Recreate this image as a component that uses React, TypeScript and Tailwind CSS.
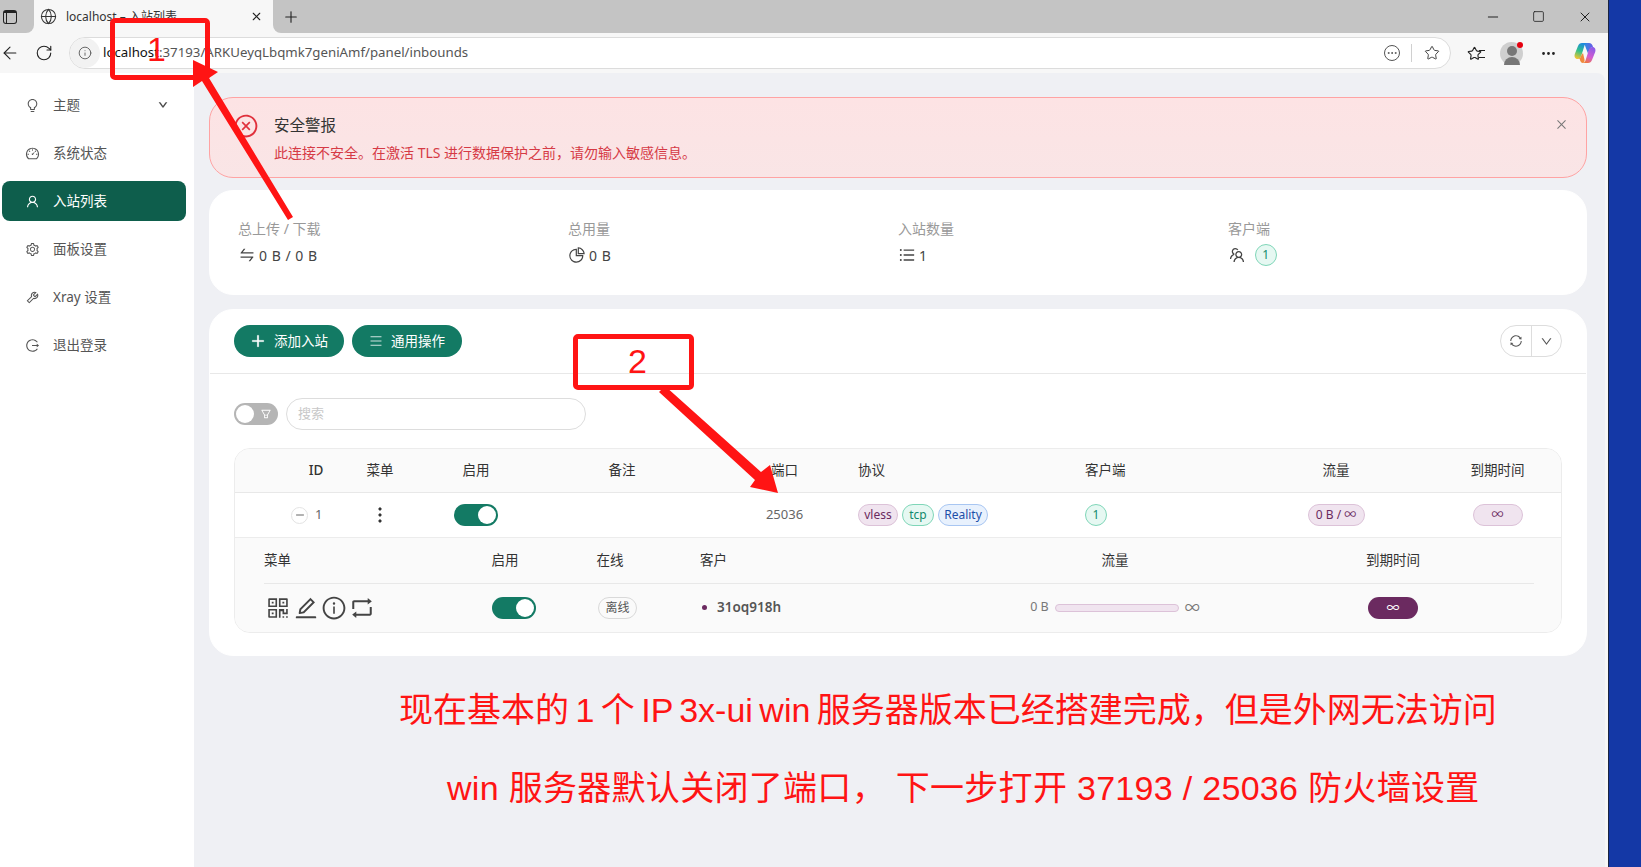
import { Globe, Minus, Plus, RotateCw, Square, Star, X, ArrowLeft, Info, Ellipsis } from "lucide-react";
import {
  AiOutlineBars,
  AiOutlineBulb,
  AiOutlineClose,
  AiOutlineCloseCircle,
  AiOutlineDashboard,
  AiOutlineDown,
  AiOutlineEdit,
  AiOutlineFilter,
  AiOutlineInfoCircle,
  AiOutlineLogout,
  AiOutlineMenu,
  AiOutlineMore,
  AiOutlinePieChart,
  AiOutlinePlus,
  AiOutlineQrcode,
  AiOutlineRetweet,
  AiOutlineSetting,
  AiOutlineSwap,
  AiOutlineSync,
  AiOutlineTeam,
  AiOutlineTool,
  AiOutlineUser,
} from "react-icons/ai";
import type { ReactNode } from "react";

const pillTones = {
  purple: "bg-[#f0e4ef] border-[#dcc2d8] text-[#6b2a60]",
  green: "bg-[#e6f8f2] border-[#7fd6b8] text-[#128a6c]",
  blue: "bg-[#e8f1fd] border-[#a8c6f2] text-[#1d4fa8]",
};

function Pill({ tone, className = "", children }: { tone: keyof typeof pillTones; className?: string; children: ReactNode }) {
  return (
    <span className={`flex h-[22px] items-center justify-center rounded-full border text-[12px] ${pillTones[tone]} ${className}`}>
      {children}
    </span>
  );
}

function Toggle() {
  return (
    <span className="flex h-[22px] w-[44px] items-center justify-end rounded-full bg-[#137a64] pr-[2px]">
      <span className="size-[18px] rounded-full bg-white" />
    </span>
  );
}

function NavItem({ icon, label, active, chevron }: { icon: ReactNode; label: string; active?: boolean; chevron?: boolean }) {
  return (
    <li
      className={`ml-[2px] mr-2 flex h-10 items-center gap-[13px] rounded-lg pl-[22px] text-[13.5px] ${
        active ? "bg-[#0e5e4c] text-white" : "text-[#555]"
      }`}
    >
      <span className="flex w-4 justify-center text-[15px]">{icon}</span>
      {label}
      {chevron && <AiOutlineDown className="ml-[65px] text-[10px] text-[#333] [stroke-width:60]" />}
    </li>
  );
}

function Stat({ label, icon, children }: { label: string; icon: ReactNode; children: ReactNode }) {
  return (
    <div className="w-[330px]">
      <div className="text-[14px] leading-5 text-[#999]">{label}</div>
      <div className="mt-[6px] flex h-5 items-center gap-[3px] text-[14px] tracking-[0.5px] text-[#444]">
        <span className="text-[18px]">{icon}</span>
        {children}
      </div>
    </div>
  );
}

function GreenButton({ icon, label }: { icon: ReactNode; label: string }) {
  return (
    <button className="flex h-8 w-[110px] items-center justify-center gap-[8px] rounded-full bg-[#137a64] text-[13.5px] text-white">
      {icon}
      {label}
    </button>
  );
}

function CopilotIcon() {
  return (
    <svg viewBox="0 0 24 24" className="size-[24px]">
      <defs>
        <linearGradient id="cpA" x1="0.6" y1="0" x2="0.3" y2="1">
          <stop offset="0" stopColor="#1e88e0" />
          <stop offset="0.5" stopColor="#2fc08a" />
          <stop offset="1" stopColor="#f2c531" />
        </linearGradient>
        <linearGradient id="cpB" x1="0.7" y1="0" x2="0.3" y2="1">
          <stop offset="0" stopColor="#8a5ce8" />
          <stop offset="0.6" stopColor="#d35bd0" />
          <stop offset="1" stopColor="#f0783c" />
        </linearGradient>
        <linearGradient id="cpC" x1="0" y1="0" x2="1" y2="0">
          <stop offset="0" stopColor="#1e9ae0" />
          <stop offset="1" stopColor="#6a5be6" />
        </linearGradient>
      </defs>
      <path d="M9 2h7c2 0 3.500 1.500 4 4-2 0-3.200 1.500-4 4l-1 2.500L12.500 6C12 4 11 2 9 2z" fill="url(#cpC)" />
      <path d="M9 2h5c-1 0-2 1-2.500 2.500L8.500 14c-.8 2.500-2 4-4 4C2 18 1 15.500 1.800 13L5 5C5.800 3 7 2 9 2z" fill="url(#cpA)" />
      <path d="M15 22h-5c1 0 2-1 2.500-2.500l3-9.500c.8-2.500 2-4 4-4 2.500 0 3.500 2.500 2.700 5L19 19c-.8 2-2 3-4 3z" fill="url(#cpB)" />
      <path d="M4.500 18c2 0 3.200-1.300 4-4l1.500-2 1.500 6.500c.4 1.800-.5 3.500-1.500 3.500-2 0-2.800-2-3.300-4z" fill="#f08a3c" />
    </svg>
  );
}

function BrowserChrome() {
  return (
    <>
      <div className="flex h-[33px] items-stretch bg-[#f7f7f7]">
        <div className="flex w-[34px] items-center rounded-br-lg bg-[#c4c4c4] pl-[3px]">
          <span className="h-[14px] w-[14px] rounded-[3px] border-[1.5px] border-t-[3px] border-[#222]">
            <span className="block h-full w-[3px] border-r-[1.5px] border-[#222]" />
          </span>
        </div>
        <div className="flex w-[239px] items-center rounded-t-lg pl-[5px] pr-[10px] text-[12px] text-[#333]">
          <Globe className="ml-[1px] size-[17px] text-[#333]" strokeWidth={1.5} />
          <span className="ml-[9px] flex-1">localhost – 入站列表</span>
          <X className="size-[13px] text-[#222]" />
        </div>
        <div className="flex flex-1 items-center rounded-bl-lg bg-[#c4c4c4] pl-[9px]">
          <Plus className="size-[18px] text-[#222]" strokeWidth={1.5} />
          <div className="ml-auto flex items-center gap-[30px] pr-[15px] text-[#222]">
            <Minus className="size-4" strokeWidth={1.5} />
            <Square className="mx-[1px] size-[13px]" strokeWidth={1.5} />
            <X className="ml-[1px] size-4" strokeWidth={1.5} />
          </div>
        </div>
      </div>
      <div className="flex h-10 items-center bg-[#f7f7f7] text-[#222]">
        <ArrowLeft className="size-[20px]" strokeWidth={1.3} />
        <RotateCw className="ml-[15px] size-[18px]" strokeWidth={1.5} />
        <div className="ml-[16px] flex h-8 w-[1382px] items-center rounded-full border border-[#dcdcdc] bg-white pr-[10px]">
          <span className="flex h-[30px] w-[30px] items-center justify-center rounded-full bg-[#f2f2f2]">
            <Info className="size-[14px] text-[#555]" strokeWidth={1.5} />
          </span>
          <span className="ml-[3px] text-[13.25px] text-[#555]">
            <span className="text-[#111]">localhost</span>:37193/ARKUeyqLbqmk7geniAmf/panel/inbounds
          </span>
          <span className="ml-auto flex size-4 items-center justify-center rounded-full border border-[#555]">
            <Ellipsis className="size-3 text-[#555]" />
          </span>
          <span className="ml-[11px] h-[18px] w-px bg-[#d0d0d0]" />
          <Star className="ml-[12px] size-[16px] text-[#444]" strokeWidth={1.5} />
        </div>
        <span className="relative ml-[16px] flex">
          <Star className="size-[15px]" strokeWidth={1.8} />
          <span className="absolute left-[12px] top-[4px] h-[8px] w-[6px] border-y-[1.5px] border-[#222]" />
        </span>
        <span className="relative ml-[18px] flex size-[23px] items-end justify-center overflow-visible rounded-full bg-[#cfcfcf]">
          <span className="absolute top-[4px] size-[10px] rounded-full bg-[#777]" />
          <span className="h-[8px] w-[16px] rounded-t-full bg-[#777]" />
          <span className="absolute right-0 top-0 size-[6px] rounded-full bg-[#e5000f]" />
        </span>
        <Ellipsis className="ml-[17px] size-[17px]" />
        <span className="ml-[16px] flex">
          <CopilotIcon />
        </span>
      </div>
    </>
  );
}

function Annotations() {
  return (
    <>
      <div className="absolute left-[110px] top-[18px] h-[62px] w-[100px] rounded-[5px] border-[5px] border-[#ff1414]" />
      <span className="absolute left-[147px] top-[29px] text-[34px] leading-10 text-[#ff1414] [font-family:'Liberation_Sans',sans-serif]">1</span>
      <div className="absolute left-[573px] top-[334px] h-[56px] w-[121px] rounded-[5px] border-[5px] border-[#ff1414]" />
      <span className="absolute left-[628px] top-[341px] text-[34px] leading-10 text-[#ff1414] [font-family:'Liberation_Sans',sans-serif]">2</span>
      <svg className="pointer-events-none absolute left-0 top-0 size-full" viewBox="0 0 1641 867">
        <polygon points="193,60 218,72 209,78 293,217 288,220 202,81 193,87" fill="#ff1414" />
        <polygon points="778,493 770,465 761,472 665,386 659,392 755,480 750,487" fill="#ff1414" />
      </svg>
      <p className="absolute left-[399px] top-[688px] whitespace-nowrap text-[34px] leading-[44px] text-[#ff1414] [word-spacing:-3px] [font-family:'Liberation_Sans','Noto_Sans_CJK_SC',sans-serif]">
        现在基本的 1 个 IP 3x-ui win 服务器版本已经搭建完成，但是外网无法访问
      </p>
      <p className="absolute left-[447px] top-[766px] whitespace-nowrap text-[34px] leading-[44px] tracking-[0.3px] text-[#ff1414] [font-family:'Liberation_Sans','Noto_Sans_CJK_SC',sans-serif]">
        win 服务器默认关闭了端口， 下一步打开 37193 / 25036 防火墙设置
      </p>
    </>
  );
}

export default function App() {
  return (
    <div className="relative flex h-[867px] w-[1641px] overflow-hidden bg-[#1438a6] [font-family:'Noto_Sans','Noto_Sans_CJK_SC',sans-serif]">
      <div className="flex h-full w-[1609px] flex-col border-r border-[#1a2340] bg-[#f7f7f7]">
        <BrowserChrome />
        <div className="flex flex-1">
          <nav className="w-[194px] shrink-0 bg-white pt-3">
            <ul className="flex flex-col gap-2">
              <NavItem icon={<AiOutlineBulb />} label="主题" chevron />
              <NavItem icon={<AiOutlineDashboard />} label="系统状态" />
              <NavItem icon={<AiOutlineUser />} label="入站列表" active />
              <NavItem icon={<AiOutlineSetting />} label="面板设置" />
              <NavItem icon={<AiOutlineTool />} label="Xray 设置" />
              <NavItem icon={<AiOutlineLogout />} label="退出登录" />
            </ul>
          </nav>

          <main className="mr-[3px] flex min-w-0 flex-1 flex-col rounded-tr-lg bg-[#eff0f4] pl-[15px] pr-[18px] pt-6">
            <div className="flex h-[81px] items-start rounded-[24px] border border-[#ffa3a3] bg-linear-to-b from-[#fde3e4] to-[#f9e5e6] pl-[23px] pr-[18px] pt-[15px]">
              <AiOutlineCloseCircle className="size-[26px] text-[#e0303c]" />
              <div className="ml-[15px]">
                <div className="text-[15.5px] leading-6 text-[#333]">安全警报</div>
                <div className="mt-[6px] text-[14px] leading-5 text-[#d63a45]">
                  此连接不安全。在激活 TLS 进行数据保护之前，请勿输入敏感信息。
                </div>
              </div>
              <AiOutlineClose className="ml-auto mt-[5px] size-[13px] text-[#777]" />
            </div>

            <section className="mt-3 flex h-[105px] rounded-[24px] border border-white bg-white pl-[28px] pt-[28px]">
              <Stat label="总上传 / 下载" icon={<AiOutlineSwap />}>0 B / 0 B</Stat>
              <Stat label="总用量" icon={<AiOutlinePieChart />}>0 B</Stat>
              <Stat label="入站数量" icon={<AiOutlineBars />}>1</Stat>
              <Stat label="客户端" icon={<AiOutlineTeam />}>
                <Pill tone="green" className="ml-[6px] w-[22px]">1</Pill>
              </Stat>
            </section>

            <section className="mt-[14px] h-[347px] rounded-[24px] border border-white bg-white">
              <div className="flex h-[64px] items-start justify-between border-b border-[#e8e8e8] px-6 pt-[15px]">
                <div className="flex gap-2">
                  <GreenButton icon={<AiOutlinePlus className="text-[16px] [stroke-width:40]" />} label="添加入站" />
                  <GreenButton icon={<AiOutlineMenu className="text-[14px] opacity-80" />} label="通用操作" />
                </div>
                <div className="flex h-8 w-[62px] rounded-full border border-[#ddd] text-[#555]">
                  <span className="flex flex-1 items-center justify-center border-r border-[#ddd]">
                    <AiOutlineSync className="text-[14px]" />
                  </span>
                  <span className="flex flex-1 items-center justify-center">
                    <AiOutlineDown className="text-[13px]" />
                  </span>
                </div>
              </div>

              <div className="px-6 pt-6">
                <div className="flex h-8 items-center gap-2">
                  <span className="flex h-[22px] w-[44px] items-center justify-between rounded-full bg-[#b5b5b5] pl-[2px] pr-[6px]">
                    <span className="size-[18px] rounded-full bg-white" />
                    <AiOutlineFilter className="text-[12px] text-white" />
                  </span>
                  <div className="flex h-8 w-[300px] items-center rounded-full border border-[#ddd] pl-[11px] text-[13px] text-[#c8c8c8]">
                    搜索
                  </div>
                </div>

                <div className="mt-[18px] h-[185px] overflow-hidden rounded-2xl border border-[#ececec] text-[13px] text-[#333]">
                  <div className="grid h-[44px] grid-cols-[56px_50px_78px_114px_178px_147px_227px_153px_196px_127px] items-center border-b border-[#e8e8e8] bg-[#fafafa] text-center text-[13.5px]">
                    <span />
                    <span className="font-medium">ID</span>
                    <span>菜单</span>
                    <span>启用</span>
                    <span>备注</span>
                    <span>端口</span>
                    <span className="text-left">协议</span>
                    <span className="text-left">客户端</span>
                    <span>流量</span>
                    <span>到期时间</span>
                  </div>
                  <div className="grid h-[45px] grid-cols-[56px_50px_78px_114px_178px_147px_227px_153px_196px_127px] items-center border-b border-[#ececec] bg-white text-center text-[#666]">
                    <span />
                    <span className="flex items-center justify-start gap-[7px]">
                      <span className="flex size-[17px] items-center justify-center rounded-full border border-[#e3e3e3]">
                        <Minus className="size-3 text-[#333]" strokeWidth={1.5} />
                      </span>
                      1
                    </span>
                    <span className="flex justify-center">
                      <AiOutlineMore className="text-[22px] text-[#333] [stroke-width:40]" />
                    </span>
                    <span className="flex justify-center">
                      <Toggle />
                    </span>
                    <span />
                    <span>25036</span>
                    <span className="flex gap-1">
                      <Pill tone="purple" className="w-10">vless</Pill>
                      <Pill tone="green" className="w-8">tcp</Pill>
                      <Pill tone="blue" className="w-[50px]">Reality</Pill>
                    </span>
                    <span className="flex">
                      <Pill tone="green" className="w-[22px]">1</Pill>
                    </span>
                    <span className="flex justify-center">
                      <Pill tone="purple" className="w-[57px]">0 B / ∞</Pill>
                    </span>
                    <span className="flex justify-center">
                      <Pill tone="purple" className="w-[50px]">∞</Pill>
                    </span>
                  </div>
                  <div className="h-[94px] bg-[#fafafa] pl-[29px] pr-[27px]">
                    <div className="grid h-[46px] grid-cols-[184px_114px_96px_302px_310px_246px_18px] items-center border-b border-[#e8e8e8] text-center text-[13.5px]">
                      <span className="text-left">菜单</span>
                      <span>启用</span>
                      <span>在线</span>
                      <span className="pl-[42px] text-left">客户</span>
                      <span>流量</span>
                      <span>到期时间</span>
                    </div>
                    <div className="grid h-[47px] grid-cols-[184px_114px_96px_302px_310px_246px_18px] items-center">
                      <span className="flex items-center gap-[2px] pl-[1px] text-[26px] text-[#444]">
                        <AiOutlineQrcode />
                        <AiOutlineEdit />
                        <AiOutlineInfoCircle />
                        <AiOutlineRetweet />
                      </span>
                      <span className="pl-[44px]">
                        <Toggle />
                      </span>
                      <span className="pl-[36px]">
                        <span className="flex h-[22px] w-[39px] items-center justify-center rounded-full border border-[#d9d9d9] text-[12px] text-[#555]">
                          离线
                        </span>
                      </span>
                      <span className="flex items-center gap-[10px] pl-[44px] text-[13.5px] font-semibold text-[#555]">
                        <span className="size-[5px] rounded-full bg-[#6b2a60]" />
                        31oq918h
                      </span>
                      <span className="flex items-center justify-center gap-[6px] text-[12.5px] text-[#777]">
                        0 B
                        <span className="h-2 w-[124px] rounded-full border border-[#dcc2d8] bg-[#f0e4ef]" />
                        <span className="text-[15px]">∞</span>
                      </span>
                      <span className="flex justify-center">
                        <span className="flex h-[22px] w-[50px] items-center justify-center rounded-full bg-[#6b2a60] text-[13px] text-white">∞</span>
                      </span>
                    </div>
                  </div>
                </div>
              </div>
            </section>
          </main>
        </div>
      </div>
      <Annotations />
    </div>
  );
}
